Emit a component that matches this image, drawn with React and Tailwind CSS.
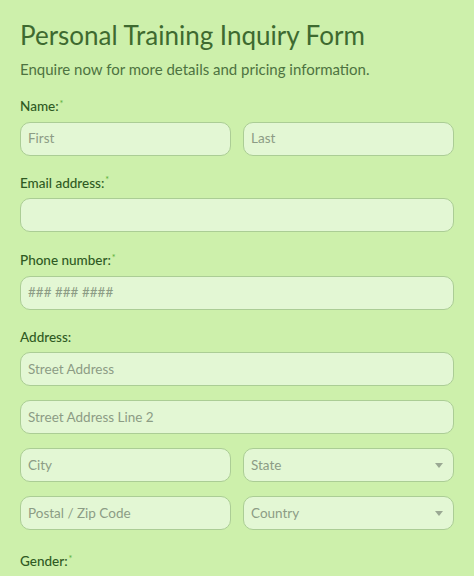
const font = { fontFamily: 'Lato, "Noto Sans", sans-serif' };

const Field = ({ placeholder, select, className = "" }) => (
  <div
    className={`h-[34px] rounded-[10px] border border-[#abcd95] bg-[#e3f7d4] flex items-center justify-between px-[7px] ${className}`}
  >
    <span className="text-[13.5px] text-[#8c9c85]">{placeholder}</span>
    {select && (
      <span className="mr-[3px] w-0 h-0 border-l-[4px] border-r-[4px] border-t-[5px] border-l-transparent border-r-transparent border-t-[#9aa893]" />
    )}
  </div>
);

const Label = ({ children, required }) => (
  <div className="text-[13.5px] font-medium text-[#2f5a23] leading-none mb-[8px]">
    {children}
    {required && <sup className="text-[#5db23c] text-[9px] ml-[1px]">*</sup>}
  </div>
);

export default function App() {
  return (
    <div className="w-[474px] h-[576px] overflow-hidden bg-[#cdf0ab] px-[20px] pt-[19px]" style={font}>
      <h1 className="text-[26px] text-[#3e6a30] leading-[32px]">
        Personal Training Inquiry Form
      </h1>
      <p className="text-[15px] text-[#4d7341] mt-[8px] leading-[20px]">
        Enquire now for more details and pricing information.
      </p>

      <div className="mt-[21px]">
        <Label required>Name:</Label>
        <div className="grid grid-cols-2 gap-[12px]">
          <Field placeholder="First" />
          <Field placeholder="Last" />
        </div>
      </div>

      <div className="mt-[21px]">
        <Label required>Email address:</Label>
        <Field />
      </div>

      <div className="mt-[22px]">
        <Label required>Phone number:</Label>
        <Field placeholder="### ### ####" />
      </div>

      <div className="mt-[21px]">
        <Label>Address:</Label>
        <div className="flex flex-col gap-[14px]">
          <Field placeholder="Street Address" />
          <Field placeholder="Street Address Line 2" />
          <div className="grid grid-cols-2 gap-[12px]">
            <Field placeholder="City" />
            <Field placeholder="State" select />
          </div>
          <div className="grid grid-cols-2 gap-[12px]">
            <Field placeholder="Postal / Zip Code" />
            <Field placeholder="Country" select />
          </div>
        </div>
      </div>

      <div className="mt-[25px]">
        <Label required>Gender:</Label>
      </div>
    </div>
  );
}
